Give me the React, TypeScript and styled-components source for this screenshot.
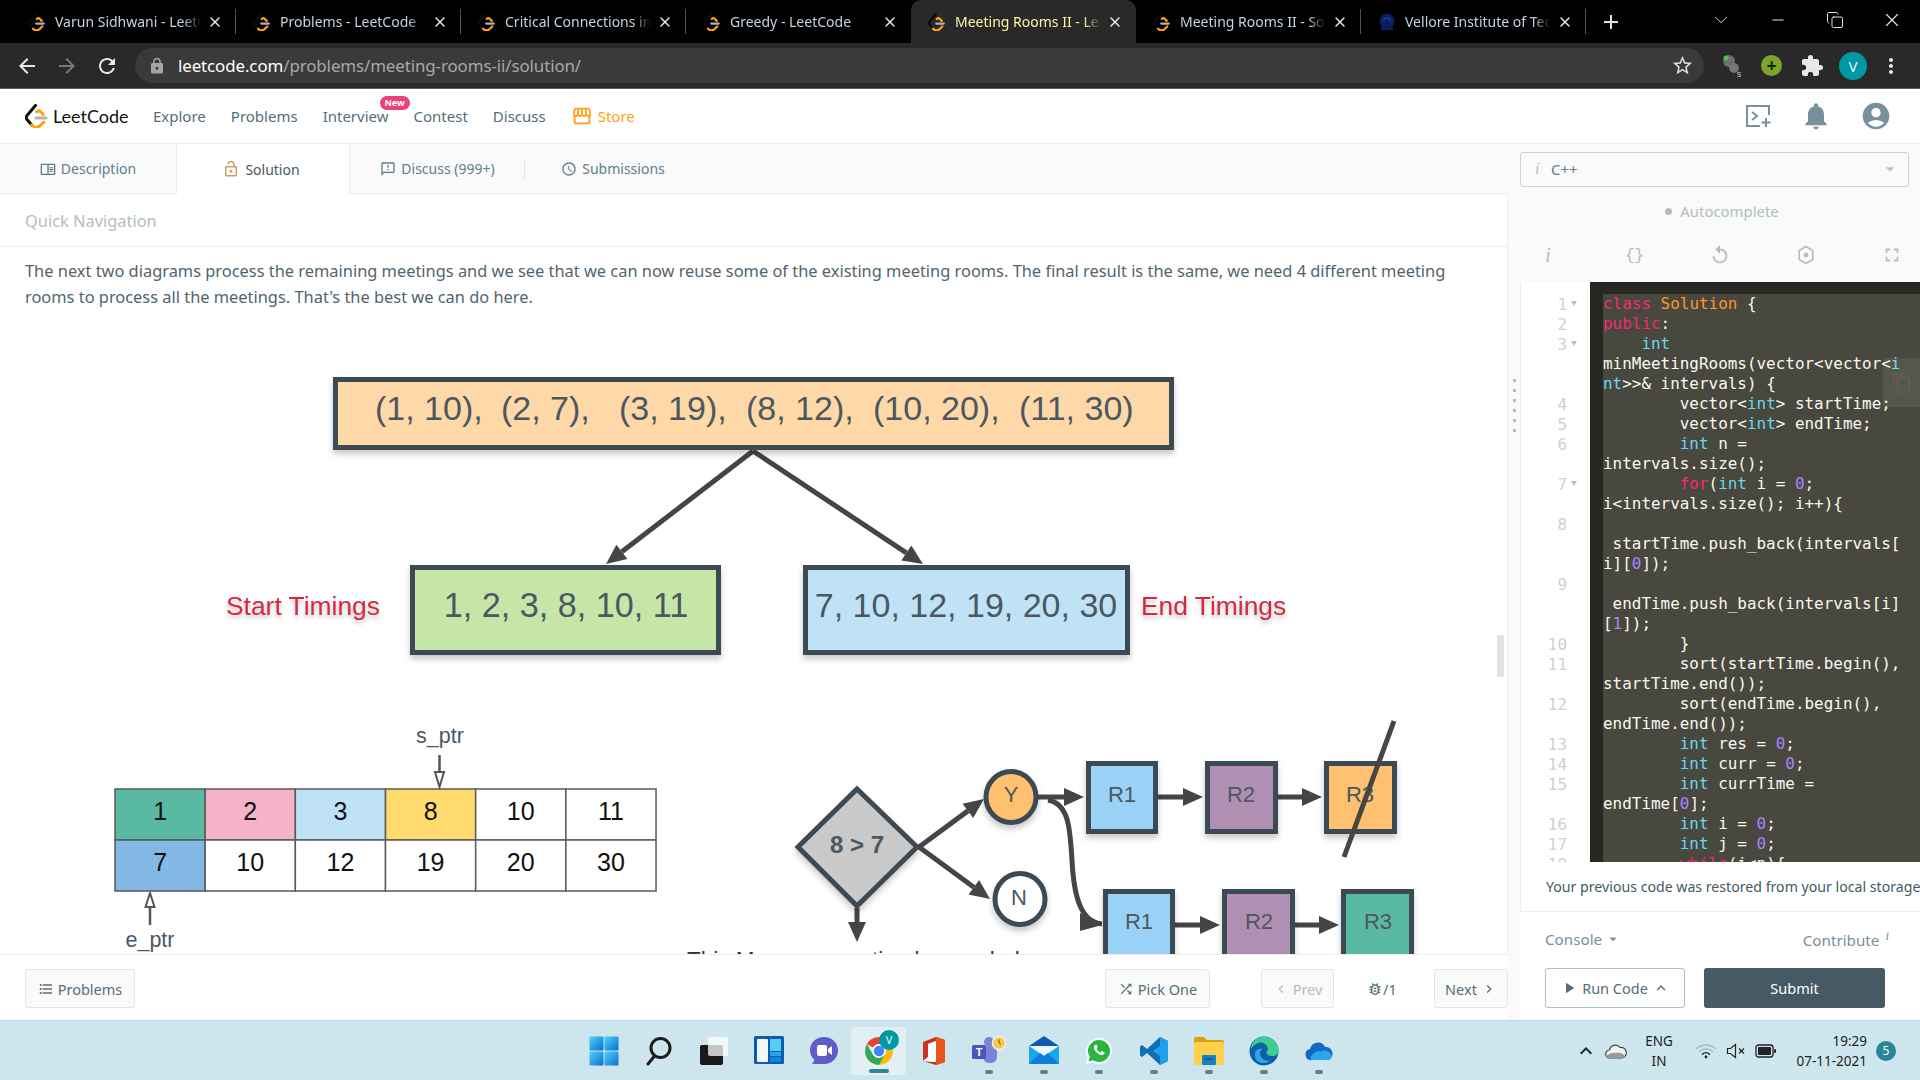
import React from "react"
import styled, { createGlobalStyle } from "styled-components"
import {
  MdArrowBack, MdArrowForward, MdRefresh, MdLock, MdStarBorder, MdExtension, MdMoreVert, MdStorefront,
  MdNotifications, MdAccountCircle, MdOutlineChromeReaderMode, MdLockOpen, MdOutlineFeedback, MdAccessTime,
  MdFormatListBulleted, MdShuffle, MdChevronLeft, MdChevronRight, MdOutlineBugReport, MdPlayArrow,
  MdKeyboardArrowUp, MdReplay, MdFullscreen, MdArrowDropDown, MdOutlineContentCopy, MdAdd,
} from "react-icons/md"
import { ChevronDown, Minus, Copy, X } from "lucide-react"

const UI_FONT = `"Noto Sans", "Open Sans", sans-serif`

const Global = createGlobalStyle`
  html, body { margin: 0; padding: 0; height: 100%; overflow: hidden; background: #fff; }
  body { font-family: ${UI_FONT}; }
  * { box-sizing: border-box; }
`

const Page = styled.div`
  width: 1920px;
  height: 1080px;
  display: flex;
  flex-direction: column;
  overflow: hidden;
`

/* ---------- browser chrome ---------- */

const TabStrip = styled.div`
  height: 43px;
  background: #000;
  display: flex;
  align-items: stretch;
  padding-left: 11px;
  flex: none;
`

const BrowserTab = styled.div<{ $active?: boolean; $last?: boolean }>`
  width: 225px;
  flex: none;
  display: flex;
  align-items: center;
  padding-left: 17px;
  position: relative;
  color: ${p => (p.$active ? "#fdf5a0" : "#c6d3e2")};
  background: ${p => (p.$active ? "#292929" : "transparent")};
  border-radius: ${p => (p.$active ? "10px 10px 0 0" : "0")};
  font-size: 14px;
  &::after {
    content: "";
    position: absolute;
    right: 0;
    top: 9px;
    bottom: 9px;
    width: 1px;
    background: ${p => (p.$active || p.$last ? "transparent" : "#555")};
  }
`

const TabTitle = styled.span`
  width: 146px;
  margin-left: 9px;
  white-space: nowrap;
  overflow: hidden;
  -webkit-mask-image: linear-gradient(to right, #000 88%, transparent);
  mask-image: linear-gradient(to right, #000 88%, transparent);
`

const TabClose = styled.span`
  margin-left: 6px;
  display: flex;
  color: #e8e8e8;
`

const NewTab = styled.div`
  width: 50px;
  display: flex;
  align-items: center;
  justify-content: center;
  font-size: 24px;
  color: #e0e0e0;
`

const WindowControls = styled.div`
  margin-left: auto;
  display: flex;
  align-items: center;
  color: #e8e8e8;
  padding-bottom: 4px;
`

const WindowButton = styled.div`
  width: 57px;
  display: flex;
  justify-content: center;
`

const AddressRow = styled.div`
  height: 46px;
  background: #292929;
  border-bottom: 1px solid #5c5c5c;
  display: flex;
  align-items: center;
  padding: 0 0 0 7px;
  flex: none;
`

const RoundIcon = styled.div<{ $muted?: boolean }>`
  width: 40px;
  display: flex;
  justify-content: center;
  font-size: 24px;
  color: ${p => (p.$muted ? "#777" : "#e8e8e8")};
`

const Omnibox = styled.div`
  margin-left: 8px;
  width: 1569px;
  height: 35px;
  border-radius: 18px;
  background: #3a3a3a;
  display: flex;
  align-items: center;
  padding: 0 10px 0 13px;
`

const LockIcon = styled(MdLock)`
  font-size: 18px;
  color: #a6a6a6;
`

const Url = styled.div`
  margin-left: 12px;
  font-size: 16.9px;
  color: #a8a8a8;
  letter-spacing: -0.1px;
  b { font-weight: 400; color: #fff; }
`

const StarIcon = styled(MdStarBorder)`
  margin-left: auto;
  font-size: 23px;
  color: #e0e0e0;
`

const Extensions = styled.div`
  display: flex;
  align-items: center;
  margin-left: 17px;
  gap: 18px;
`

const GreenExt = styled.div`
  width: 21px;
  height: 21px;
  border-radius: 50%;
  background: #7ca32a;
  color: #10240a;
  display: flex;
  align-items: center;
  justify-content: center;
  font-size: 17px;
  font-weight: 700;
`

const Avatar = styled.div`
  width: 28px;
  height: 28px;
  margin-left: -3px;
  border-radius: 50%;
  background: #0097a7;
  color: #e8f8fa;
  font-size: 15px;
  display: flex;
  align-items: center;
  justify-content: center;
`

const MoreIcon = styled(MdMoreVert)`
  font-size: 24px;
  color: #e8e8e8;
  margin-left: -6px;
`

/* ---------- leetcode nav ---------- */

const Nav = styled.div`
  height: 55px;
  flex: none;
  background: #fff;
  border-bottom: 1px solid #eeeeee;
  display: flex;
  align-items: center;
  padding-left: 25px;
`

const Brand = styled.div`
  display: flex;
  align-items: center;
  gap: 4px;
  font-family: "Lato", sans-serif;
  font-size: 18px;
  color: #111;
  width: 128px;
`

const NavItem = styled.div<{ $accent?: boolean }>`
  position: relative;
  font-size: 15px;
  color: ${p => (p.$accent ? "#ffa116" : "#546e7a")};
  margin-right: 25px;
  display: flex;
  align-items: center;
  gap: 5px;
  svg { font-size: 22px; }
`

const NewBadge = styled.span`
  position: absolute;
  left: 57px;
  top: -10px;
  width: 30px;
  height: 14px;
  border-radius: 7px;
  background: #ec407a;
  color: #fff;
  font-size: 9px;
  font-weight: 700;
  line-height: 14px;
  text-align: center;
`

const NavRight = styled.div`
  margin-left: auto;
  display: flex;
  align-items: center;
  gap: 28px;
  padding-right: 28px;
  color: #78909c;
  svg { display: block; }
`

/* ---------- workspace ---------- */

const Workspace = styled.div`
  flex: 1;
  min-height: 0;
  display: flex;
  background: #fafafa;
`

const LeftColumn = styled.div`
  width: 1508px;
  display: flex;
  flex-direction: column;
  flex: none;
`

const TabRow = styled.div`
  height: 50px;
  flex: none;
  display: flex;
  border-bottom: 1px solid #eeeeee;
`

const SubTab = styled.div<{ $active?: boolean; $w: number; $divider?: boolean }>`
  width: ${p => p.$w}px;
  height: ${p => (p.$active ? "50px" : "49px")};
  position: relative;
  display: flex;
  align-items: center;
  justify-content: center;
  gap: 5px;
  font-size: 14px;
  color: ${p => (p.$active ? "#455a64" : "#607d8b")};
  background: ${p => (p.$active ? "#fff" : "transparent")};
  border-right: ${p => (p.$active ? "1px solid #eeeeee" : "none")};
  border-left: ${p => (p.$active ? "1px solid #eeeeee" : "none")};
  svg { font-size: 16px; }
  &::after {
    content: "";
    display: ${p => (p.$divider ? "block" : "none")};
    position: absolute;
    right: 0;
    top: 15px;
    height: 20px;
    width: 1px;
    background: #e4e4e4;
  }
`

const SolutionIcon = styled(MdLockOpen)`
  color: #c8a165;
  margin-left: -4px;
  && { font-size: 18px; }
`

const ContentPanel = styled.div`
  flex: 1;
  min-height: 0;
  background: #fff;
  border-right: 1px solid #eeeeee;
  border-bottom: 1px solid #eeeeee;
  overflow: hidden;
  position: relative;
`

const QuickNav = styled.div`
  height: 53px;
  border-bottom: 1px solid #eeeeee;
  padding-left: 25px;
  display: flex;
  align-items: center;
  font-size: 16.4px;
  color: #b0bec5;
`

const Paragraph = styled.p`
  margin: 0;
  padding: 11px 25px 0;
  font-size: 16.4px;
  line-height: 26px;
  color: #4f6570;
  width: 1482px;
  height: 63px;
`

const Scrollbar = styled.div`
  position: absolute;
  right: 3px;
  top: 441px;
  width: 7px;
  height: 42px;
  background: #e2e2e2;
`

const Diagram = styled.svg`
  display: block;
  font-family: "Liberation Sans", Arial, sans-serif;
`

const ShadowGroup = styled.g`
  filter: drop-shadow(0 4px 3px rgba(0, 0, 0, 0.22));
`

const BoxRect = styled.rect`
  stroke: #3c4a56;
  stroke-width: 5;
`

const Label = styled.text<{ $size: number; $color?: string; $bold?: boolean }>`
  font-size: ${p => p.$size}px;
  fill: ${p => p.$color || "#4b5761"};
  font-weight: ${p => (p.$bold ? 700 : 400)};
`

const RedLabel = styled(Label)`
  filter: drop-shadow(0 3px 2px rgba(0, 0, 0, 0.25));
`

const Footer = styled.div`
  height: 65px;
  flex: none;
  background: #fff;
  display: flex;
  align-items: center;
  padding: 2px 0 0 25px;
  position: relative;
`

const FooterButton = styled.div<{ $dim?: boolean; $w: number; $ml?: number }>`
  width: ${p => p.$w}px;
  height: 39px;
  margin-left: ${p => p.$ml || 0}px;
  border: 1px solid #dfe5e8;
  border-radius: 3px;
  background: #fafafa;
  display: flex;
  align-items: center;
  justify-content: center;
  gap: 4px;
  font-size: 14.5px;
  color: ${p => (p.$dim ? "#b0bec5" : "#546e7a")};
  svg { font-size: 16px; }
`

const BugCount = styled.div`
  margin-left: 33px;
  width: 67px;
  display: flex;
  align-items: center;
  font-size: 14.5px;
  color: #546e7a;
  svg { font-size: 16px; }
`

const Splitter = styled.div`
  width: 12px;
  flex: none;
  display: flex;
  flex-direction: column;
  align-items: center;
  justify-content: center;
  gap: 7px;
  padding-bottom: 354px;
`

const GripDot = styled.span`
  width: 3px;
  height: 3px;
  background: #bbb;
`

const RightColumn = styled.div`
  flex: 1;
  min-width: 0;
  display: flex;
  flex-direction: column;
  overflow: hidden;
`

const LangSelect = styled.div`
  margin-top: 8px;
  width: 389px;
  height: 35px;
  flex: none;
  border: 1px solid #c5d5dd;
  border-radius: 3px;
  background: #fafafa;
  display: flex;
  align-items: center;
  padding: 0 0 2px 14px;
  font-size: 15px;
  color: #607d8b;
  i { font-family: "Liberation Serif", serif; color: #b0bec5; width: 16px; font-size: 16px; }
  svg { margin-left: auto; margin-right: 8px; font-size: 20px; color: #b0bec5; }
`

const AutoRow = styled.div`
  height: 50px;
  flex: none;
  display: flex;
  align-items: center;
  justify-content: center;
  padding: 0 0 2px 4px;
  gap: 8px;
  font-size: 14.9px;
  color: #b0bec5;
  &::before {
    content: "";
    width: 7px;
    height: 7px;
    border-radius: 50%;
    background: #b0bec5;
  }
`

const IconRow = styled.div`
  height: 38px;
  flex: none;
  display: flex;
  align-items: center;
  justify-content: space-between;
  color: #b0bec5;
  padding: 0 16px 2px;
  svg { display: block; }
`

const ToolIcon = styled.div`
  width: 24px;
  display: flex;
  justify-content: center;
  font-size: 22px;
  line-height: 1;
`

const ItalicI = styled.span`
  font-family: "Liberation Serif", serif;
  font-style: italic;
  font-size: 21px;
`

const Editor = styled.div`
  height: 580px;
  flex: none;
  margin-top: 7px;
  border-left: 1px solid #eeeeee;
  display: grid;
  grid-template-columns: 69px 1fr;
  overflow: hidden;
  background: #272822;
  position: relative;
`

const Gutter = styled.div`
  background: #fff;
  padding-top: 13px;
`

const GutterRow = styled.div`
  height: 20px;
  font-family: "DejaVu Sans Mono", monospace;
  font-size: 15.9px;
  line-height: 20px;
  color: #cfcfcf;
  display: flex;
  justify-content: flex-end;
  padding-right: 12px;
`

const FoldMark = styled.span<{ $show: boolean }>`
  width: 11px;
  padding-left: 4px;
  visibility: ${p => (p.$show ? "visible" : "hidden")};
  &::before {
    content: "";
    display: inline-block;
    border: 3.5px solid transparent;
    border-top: 5px solid #bbb;
    vertical-align: 1px;
  }
`

const CodeArea = styled.div`
  margin: 12px 0 0 13px;
  background: #49483e;
`

const CodeRow = styled.div`
  height: 20px;
  font-family: "DejaVu Sans Mono", monospace;
  font-size: 15.94px;
  line-height: 20px;
  white-space: pre;
  color: #f8f8f2;
`

const Tok = styled.span<{ $c: string }>`
  color: ${p => p.$c};
`

const CopyButton = styled.div`
  position: absolute;
  right: 0;
  top: 76px;
  width: 37px;
  height: 49px;
  background: rgba(255, 255, 255, 0.08);
  display: flex;
  align-items: center;
  justify-content: center;
  color: #5e5d54;
  font-size: 22px;
`

const Notice = styled.div`
  height: 50px;
  flex: none;
  background: #fff;
  border-left: 1px solid #eeeeee;
  border-bottom: 1px solid #eeeeee;
  display: flex;
  align-items: center;
  padding-left: 25px;
  font-size: 14.15px;
  color: #455a64;
  white-space: nowrap;
`

const LowerPane = styled.div`
  flex: 1;
  background: #fff;
  padding-left: 25px;
`

const ConsoleRow = styled.div`
  height: 56px;
  width: 344px;
  display: flex;
  align-items: center;
  justify-content: space-between;
  font-size: 15.2px;
  color: #78909c;
  padding-bottom: 2px;
`

const ConsoleLabel = styled.span`
  display: flex;
  align-items: center;
  gap: 2px;
  svg { font-size: 18px; }
`

const Contribute = styled.span`
  sup { font-family: "Liberation Serif", serif; font-style: italic; margin-left: 6px; font-size: 13px; }
`

const ActionRow = styled.div`
  display: flex;
  gap: 19px;
`

const RunButton = styled.div`
  width: 140px;
  height: 40px;
  border: 1px solid #b0bec5;
  border-radius: 3px;
  background: #fff;
  display: flex;
  align-items: center;
  justify-content: center;
  gap: 4px;
  font-size: 14.5px;
  color: #546e7a;
  svg { font-size: 18px; }
`

const SubmitButton = styled.div`
  width: 181px;
  height: 40px;
  border-radius: 3px;
  background: #455a64;
  color: #fff;
  display: flex;
  align-items: center;
  justify-content: center;
  font-size: 14.5px;
`

/* ---------- taskbar ---------- */

const Taskbar = styled.div`
  height: 60px;
  flex: none;
  background: #cde6ee;
  border-top: 1px solid #bcd8e0;
  display: grid;
  grid-template-columns: 1fr auto 1fr;
  align-items: center;
`

const TaskIcons = styled.div`
  grid-column: 2;
  display: flex;
  padding-left: 2px;
`

const TaskCell = styled.div<{ $on?: boolean }>`
  width: 55px;
  height: 48px;
  position: relative;
  display: flex;
  align-items: center;
  justify-content: center;
  border-radius: 4px;
  background: ${p => (p.$on ? "rgba(255,255,255,0.42)" : "transparent")};
`

const RunDot = styled.span<{ $wide?: boolean }>`
  position: absolute;
  bottom: ${p => (p.$wide ? "2px" : "1px")};
  left: 50%;
  transform: translateX(-50%);
  width: ${p => (p.$wide ? "20px" : "8px")};
  height: 4px;
  border-radius: 2px;
  background: ${p => (p.$wide ? "#2d8596" : "#6b7b85")};
`

const CellBadge = styled.span`
  position: absolute;
  right: 7px;
  top: 3px;
  width: 20px;
  height: 20px;
  border-radius: 50%;
  background: #0097a7;
  color: #e8f8fa;
  font-size: 11px;
  display: flex;
  align-items: center;
  justify-content: center;
`

const Tray = styled.div`
  grid-column: 3;
  justify-self: end;
  display: flex;
  align-items: center;
  padding-right: 24px;
  color: #222;
  font-size: 13px;
`

const TrayStack = styled.div<{ $right?: boolean; $w: number }>`
  display: flex;
  flex-direction: column;
  align-items: ${p => (p.$right ? "flex-end" : "center")};
  width: ${p => p.$w}px;
  line-height: 20px;
  font-size: 13.5px;
`

const TrayIcon = styled.div<{ $w: number }>`
  width: ${p => p.$w}px;
  display: flex;
  justify-content: center;
  svg { display: block; }
`

const CountBadge = styled.div`
  margin-left: 9px;
  width: 20px;
  height: 20px;
  border-radius: 50%;
  background: #2a8599;
  color: #fff;
  font-size: 12px;
  display: flex;
  align-items: center;
  justify-content: center;
`

/* ---------- small drawings ---------- */

const LeetLogo = ({ size, ink }: { size: number; ink: string }) => (
  <svg width={size} height={size} viewBox="0 0 24 24" fill="none" strokeLinecap="round" strokeLinejoin="round" strokeWidth="3">
    <path d="M10.500 1.500 2 11.500q-1.500 2 0 4L6.700 21" stroke={ink} />
    <path d="M6.700 21q2.500 2.500 5 2.300 2-.2 3.500-1.600L19 18" stroke="#ffa116" />
    <path d="M11.700 7.700q2-1.500 3.500-.3L18.300 10.500" stroke="#ffa116" />
    <path d="M11 14h10" stroke="#b3b3b3" />
  </svg>
)

const TerminalPlus = () => (
  <svg width="28" height="24" viewBox="0 0 28 24" fill="none" stroke="#78909c" strokeWidth="2">
    <path d="M25 11V2H3v20h13" />
    <path d="m8 8 5 4-5 4" />
    <path d="M22 14v9M17.500 18.500h9" />
  </svg>
)

const BraceText = styled.span`
  font-family: "Liberation Mono", monospace;
  font-size: 17px;
  letter-spacing: -1px;
`

const GearIcon = () => (
  <svg width="18" height="20" viewBox="0 0 18 20" fill="none" stroke="#b0bec5" strokeWidth="1.600">
    <path d="M9 1.500l6.800 4v9L9 18.500l-6.800-4v-9z" />
    <circle cx="9" cy="10" r="1.600" fill="#b0bec5" />
  </svg>
)

const VelloreIcon = () => (
  <svg width="18" height="18" viewBox="0 0 18 18">
    <circle cx="9" cy="8" r="7.500" fill="#0a1f5c" />
    <path d="M3 14h12v3H3z" fill="#0a1f5c" />
    <path d="M5.500 8a3.500 3 0 0 1 7 0" stroke="#1e3f9e" fill="none" strokeWidth="1.500" />
  </svg>
)

const StartIcon = () => (
  <svg width="30" height="30" viewBox="0 0 30 30">
    <defs>
      <linearGradient id="startG" x1="0" y1="0" x2="1" y2="1">
        <stop offset="0" stopColor="#4fd0fb" />
        <stop offset="1" stopColor="#0a6fd0" />
      </linearGradient>
    </defs>
    <rect x="0.500" y="0.500" width="14" height="14" rx="1" fill="url(#startG)" />
    <rect x="15.500" y="0.500" width="14" height="14" rx="1" fill="url(#startG)" />
    <rect x="0.500" y="15.500" width="14" height="14" rx="1" fill="url(#startG)" />
    <rect x="15.500" y="15.500" width="14" height="14" rx="1" fill="url(#startG)" />
  </svg>
)

const SearchIcon = () => (
  <svg width="28" height="30" viewBox="0 0 28 30" fill="none" stroke="#1c1c1c" strokeWidth="3">
    <circle cx="15.500" cy="12" r="9.500" />
    <path d="M9.500 20 3 28" strokeLinecap="round" />
  </svg>
)

const TaskViewIcon = () => (
  <svg width="30" height="30" viewBox="0 0 30 30">
    <rect x="1" y="9" width="23" height="20" rx="2" fill="#1a1a1a" />
    <rect x="9" y="1" width="20" height="19" rx="2" fill="#fff" fillOpacity="0.75" />
  </svg>
)

const WidgetsIcon = () => (
  <svg width="30" height="30" viewBox="0 0 30 30">
    <rect x="0" y="0" width="30" height="28" rx="1.500" fill="#0b5cad" />
    <rect x="3" y="3" width="11" height="23" rx="1" fill="#f2f6fa" />
    <rect x="16" y="3" width="11" height="12" fill="#58cdf5" />
    <rect x="16" y="16" width="11" height="4" fill="#2aa4ec" />
    <rect x="16" y="21" width="11" height="5" fill="#0a84e0" />
  </svg>
)

const ChatIcon = () => (
  <svg width="30" height="30" viewBox="0 0 30 30">
    <path d="M15 1c8 0 14 6 14 13.500S23 28 15 28H3l2.500-4C3 21.500 1 18.500 1 14.500 1 6.500 7 1 15 1z" fill="#5f5bc9" />
    <rect x="8" y="9" width="10" height="11" rx="2" fill="#fff" />
    <path d="m19 13 4-3v9l-4-3z" fill="#fff" />
  </svg>
)

const ChromeIcon = () => (
  <svg width="30" height="30" viewBox="0 0 30 30">
    <path d="M15 1a14 14 0 0 1 12.100 7H15a7 7 0 0 0-6.100 3.500L2.900 8A14 14 0 0 1 15 1z" fill="#ea4335" />
    <path d="M27.100 8A14 14 0 0 1 15 29l6.100-10.500A7 7 0 0 0 21 11.500L27.100 8z" fill="#fbbc04" />
    <path d="M15 29A14 14 0 0 1 2.900 8l6 10.500a7 7 0 0 0 6.100 3.500l6.100-3.500z" fill="#34a853" />
    <circle cx="15" cy="15" r="6" fill="#4285f4" stroke="#fff" strokeWidth="1.500" />
  </svg>
)

const OfficeIcon = () => (
  <svg width="26" height="30" viewBox="0 0 26 30">
    <path d="M2 6 15 1l9 3v22l-9 3-13-4 13 1V5l-8 3v13l-5 4z" fill="#c8321e" />
    <path d="M15 1l9 3v22l-9 3z" fill="#e8541c" />
    <path d="M15 5v21l-13-1 5-4V8z" fill="#fff" fillOpacity="0.9" />
  </svg>
)

const TeamsIcon = () => (
  <svg width="36" height="32" viewBox="0 0 36 32">
    <circle cx="18" cy="7" r="5" fill="#7b83d8" />
    <rect x="12" y="11" width="14" height="17" rx="6" fill="#7b83d8" />
    <rect x="1" y="10" width="14" height="14" rx="1.500" fill="#4b53bc" />
    <text x="8" y="21" fontSize="11" fontWeight="700" fill="#fff" textAnchor="middle" fontFamily="Liberation Sans">T</text>
    <circle cx="28" cy="8" r="6.500" fill="#f7c948" stroke="#eee" strokeWidth="1.500" />
    <path d="M28 4.500V8l2 1.500" stroke="#7a5a00" strokeWidth="1" fill="none" />
  </svg>
)

const MailIcon = () => (
  <svg width="30" height="30" viewBox="0 0 30 30">
    <path d="M0 10 15 0l15 10v5H0z" fill="#0b5cad" />
    <rect x="0" y="10" width="30" height="18" fill="#1aa6ea" />
    <path d="M0 10h30L15 20z" fill="#eaf6fc" />
    <path d="M0 28l11-11 4 3 4-3 11 11z" fill="#0e7fd6" />
  </svg>
)

const WhatsappIcon = () => (
  <svg width="28" height="28" viewBox="0 0 28 28">
    <path d="M14 1a13 13 0 0 1 0 26c-2.400 0-4.500-.6-6.400-1.700L1 27l1.800-6.400A13 13 0 0 1 14 1z" fill="#fff" />
    <path d="M14 3a11 11 0 0 1 0 22c-2.200 0-4.200-.6-5.900-1.700L3.500 24.500l1.300-4.500A11 11 0 0 1 14 3z" fill="#2ab540" />
    <path d="M10 8c-1.500 1.200-1.500 3 0 5.400 1.800 2.800 4.400 4.600 6.600 4.600 1.700 0 3-1 3.200-2.400l-3-1.500-1.300 1.400c-1.800-.7-3.200-2.200-4-4l1.200-1.300-1.400-2.900z" fill="#fff" />
  </svg>
)

const VsCodeIcon = () => (
  <svg width="30" height="30" viewBox="0 0 30 30">
    <path d="M21 1 29 5v20l-8 4-13-12 -5 4-2-1.500v-9L3 9l5 4z" fill="#0f6fb5" />
    <path d="M21 1 29 5v20l-8 4V20l-7-5 7-5z" fill="#1ea1ea" />
  </svg>
)

const FolderIcon = () => (
  <svg width="30" height="28" viewBox="0 0 30 28">
    <path d="M0 2q0-2 2-2h8l3 3h15q2 0 2 2v3H0z" fill="#d9a30a" />
    <rect x="0" y="5" width="30" height="23" rx="1.500" fill="#ffd04f" />
    <rect x="8" y="18" width="14" height="10" rx="1" fill="#1581c7" />
    <rect x="11" y="21" width="8" height="2" fill="#0b5a99" />
  </svg>
)

const EdgeIcon = () => (
  <svg width="30" height="30" viewBox="0 0 30 30">
    <circle cx="15" cy="15" r="14.500" fill="#0d5fad" />
    <path d="M15 .5C23 .5 29.500 7 29.500 15c0 3-2.500 5-6 5-4 0-6-1.500-6-3.500 0-1 .5-2 1.500-2.800C18.500 8 13 5.500 9 7c-3 1-5.500 3.500-7 6C2.500 6 8 .5 15 .5z" fill="#3ccf8e" />
    <path d="M11 17c0 4.500 4 8 9.500 8-1.800 1.500-3.800 2-6 2C8 27 5 22 6 17c.8-3.500 4.500-5 7.500-4-1.500 1-2.500 2.300-2.500 4z" fill="#29a8e0" />
  </svg>
)

const OneDriveIcon = () => (
  <svg width="28" height="20" viewBox="0 0 28 20">
    <path d="M6 19a5.500 5.500 0 0 1-1-10.900A8 8 0 0 1 20 6a6.500 6.500 0 0 1 2 13z" fill="#1268c3" />
    <path d="M8 19c-3 0-3-3-1-4.500 1.500-3 5-5 9-4 3-2 8-1 9 2 2 .8 3 5-1 6.500z" fill="#28a8ea" />
  </svg>
)

const TrayCloud = () => (
  <svg width="22" height="16" viewBox="0 0 22 16">
    <path d="M5 15a4 4 0 0 1-.6-8A6 6 0 0 1 15 4.500 4.800 4.800 0 0 1 17 15z" fill="#f2f2f2" stroke="#444" strokeWidth="1.200" />
    <path d="M5 15a3.500 3.500 0 0 1-3-3c3-1.500 5-3 9-2 3-1 7 0 9 3-.5 1-1.500 2-3 2z" fill="#999" />
  </svg>
)

const WifiIcon = () => (
  <svg width="22" height="16" viewBox="0 0 22 16" fill="none" strokeLinecap="round">
    <path d="M1.500 5.500a14 14 0 0 1 19 0" stroke="#9fb4ba" strokeWidth="1.300" />
    <path d="M4.500 8.500a9.500 9.500 0 0 1 13 0" stroke="#9fb4ba" strokeWidth="1.300" />
    <path d="M7.500 11.200a5 5 0 0 1 7 0" stroke="#222" strokeWidth="1.400" />
    <circle cx="11" cy="14" r="1.400" fill="#222" />
  </svg>
)

const MuteIcon = () => (
  <svg width="22" height="16" viewBox="0 0 22 16" fill="none" stroke="#222" strokeWidth="1.200">
    <path d="M1.500 5.500h3l5-4v13l-5-4h-3z" />
    <path d="m13 5.500 5 5M18 5.500l-5 5" />
  </svg>
)

const BatteryIcon = () => (
  <svg width="22" height="14" viewBox="0 0 22 14">
    <rect x="1" y="1" width="17" height="12" rx="2.500" fill="none" stroke="#222" strokeWidth="1.300" />
    <rect x="3" y="3" width="13" height="8" rx="1" fill="#222" />
    <rect x="19" y="5" width="2" height="4" rx="1" fill="#222" />
  </svg>
)

/* ---------- data ---------- */

const browserTabs = [
  { title: "Varun Sidhwani - LeetCode" },
  { title: "Problems - LeetCode" },
  { title: "Critical Connections in a Network" },
  { title: "Greedy - LeetCode", last: true },
  { title: "Meeting Rooms II - LeetCode", active: true },
  { title: "Meeting Rooms II - Solution" },
  { title: "Vellore Institute of Technology", vit: true },
]

const KW = "#f92672"
const TY = "#66d9ef"
const NUM = "#ae81ff"
const CL = "#fd971f"

type Seg = string | [string, string]
type Row = { n?: number; fold?: boolean; segs: Seg[] }

const codeRows: Row[] = [
  { n: 1, fold: true, segs: [["class", KW], " ", ["Solution", CL], " {"] },
  { n: 2, segs: [["public", KW], ":"] },
  { n: 3, fold: true, segs: ["    ", ["int", TY]] },
  { segs: ["minMeetingRooms(vector<vector<", ["i", TY]] },
  { segs: [["nt", TY], ">>& intervals) {"] },
  { n: 4, segs: ["        vector<", ["int", TY], "> startTime;"] },
  { n: 5, segs: ["        vector<", ["int", TY], "> endTime;"] },
  { n: 6, segs: ["        ", ["int", TY], " n ="] },
  { segs: ["intervals.size();"] },
  { n: 7, fold: true, segs: ["        ", ["for", KW], "(", ["int", TY], " i = ", ["0", NUM], ";"] },
  { segs: ["i<intervals.size(); i++){"] },
  { n: 8, segs: [""] },
  { segs: [" startTime.push_back(intervals["] },
  { segs: ["i][", ["0", NUM], "]);"] },
  { n: 9, segs: [""] },
  { segs: [" endTime.push_back(intervals[i]"] },
  { segs: ["[", ["1", NUM], "]);"] },
  { n: 10, segs: ["        }"] },
  { n: 11, segs: ["        sort(startTime.begin(),"] },
  { segs: ["startTime.end());"] },
  { n: 12, segs: ["        sort(endTime.begin(),"] },
  { segs: ["endTime.end());"] },
  { n: 13, segs: ["        ", ["int", TY], " res = ", ["0", NUM], ";"] },
  { n: 14, segs: ["        ", ["int", TY], " curr = ", ["0", NUM], ";"] },
  { n: 15, segs: ["        ", ["int", TY], " currTime ="] },
  { segs: ["endTime[", ["0", NUM], "];"] },
  { n: 16, segs: ["        ", ["int", TY], " i = ", ["0", NUM], ";"] },
  { n: 17, segs: ["        ", ["int", TY], " j = ", ["0", NUM], ";"] },
  { n: 18, segs: ["        ", ["while", KW], "(i<n){"] },
]

const tableTop = [
  { v: "1", fill: "#5ab9a3" },
  { v: "2", fill: "#f4b3c8" },
  { v: "3", fill: "#bfe2f6" },
  { v: "8", fill: "#ffdb6e" },
  { v: "10", fill: "#fff" },
  { v: "11", fill: "#fff" },
]

const tableBottom = [
  { v: "7", fill: "#83b8e4" },
  { v: "10", fill: "#fff" },
  { v: "12", fill: "#fff" },
  { v: "19", fill: "#fff" },
  { v: "20", fill: "#fff" },
  { v: "30", fill: "#fff" },
]

const taskIcons = [
  { icon: <StartIcon /> },
  { icon: <SearchIcon /> },
  { icon: <TaskViewIcon /> },
  { icon: <WidgetsIcon /> },
  { icon: <ChatIcon /> },
  { icon: <ChromeIcon />, on: true },
  { icon: <OfficeIcon /> },
  { icon: <TeamsIcon />, dot: true },
  { icon: <MailIcon />, dot: true },
  { icon: <WhatsappIcon />, dot: true },
  { icon: <VsCodeIcon />, dot: true },
  { icon: <FolderIcon />, dot: true },
  { icon: <EdgeIcon />, dot: true },
  { icon: <OneDriveIcon />, dot: true },
]

const topPairs = [
  { x: 375, t: "(1, 10)," },
  { x: 501, t: "(2, 7)," },
  { x: 619, t: "(3, 19)," },
  { x: 746, t: "(8, 12)," },
  { x: 873, t: "(10, 20)," },
  { x: 1019, t: "(11, 30)" },
]

const DARK = "#454545"
const CELL_W = 90.17

const FlowArrow = ({ x1, y1, x2, y2 }: { x1: number; y1: number; x2: number; y2: number }) => {
  // line ending in a solid head
  const len = Math.hypot(x2 - x1, y2 - y1)
  const ux = (x2 - x1) / len
  const uy = (y2 - y1) / len
  const bx = x2 - ux * 20
  const by = y2 - uy * 20
  const head = `${x2},${y2} ${bx - uy * 9},${by + ux * 9} ${bx + uy * 9},${by - ux * 9}`
  return (
    <g>
      <line x1={x1} y1={y1} x2={bx} y2={by} stroke={DARK} strokeWidth={5} />
      <polygon points={head} fill={DARK} />
    </g>
  )
}

const SolutionDiagram = () => (
  <Diagram width={1507} height={650} viewBox="0 310 1507 650">
    <FlowArrow x1={753} y1={451} x2={606} y2={564} />
    <FlowArrow x1={753} y1={451} x2={923} y2={564} />

    <ShadowGroup>
      <BoxRect x={335.5} y={379.5} width={836} height={68} fill="#ffd8a8" />
    </ShadowGroup>
    {topPairs.map(p => (
      <Label key={p.x} x={p.x} y={420} $size={34}>{p.t}</Label>
    ))}

    <ShadowGroup>
      <BoxRect x={412.5} y={567.5} width={306} height={85} fill="#c5e6a6" />
      <BoxRect x={805.5} y={567.5} width={322} height={85} fill="#bfe2f6" />
    </ShadowGroup>
    <Label x={566} y={617} $size={34.2} textAnchor="middle">1, 2, 3, 8, 10, 11</Label>
    <Label x={966} y={617} $size={34} textAnchor="middle">7, 10, 12, 19, 20, 30</Label>
    <RedLabel x={226} y={615} $size={26.4} $color="#d5293f">Start Timings</RedLabel>
    <RedLabel x={1141} y={615} $size={26.4} $color="#d5293f">End Timings</RedLabel>

    <Label x={440} y={743} $size={21.5} textAnchor="middle">s_ptr</Label>
    <line x1={439.5} y1={755} x2={439.5} y2={772} stroke="#555" strokeWidth={2.5} />
    <polygon points="439.5,787 435,772 444,772" fill="#fff" stroke="#555" strokeWidth={2} />
    <Label x={150} y={947} $size={21.5} textAnchor="middle">e_ptr</Label>
    <line x1={150} y1={925} x2={150} y2={907} stroke="#555" strokeWidth={2.5} />
    <polygon points="150,893 145.5,907 154.5,907" fill="#fff" stroke="#555" strokeWidth={2} />

    {tableTop.map((c, i) => (
      <g key={`t${i}`}>
        <rect x={115 + i * CELL_W} y={789} width={CELL_W} height={51} fill={c.fill} stroke="#5a5a5a" strokeWidth={1.5} />
        <Label x={115 + (i + 0.5) * CELL_W} y={820} $size={25} $color="#111" textAnchor="middle">{c.v}</Label>
      </g>
    ))}
    {tableBottom.map((c, i) => (
      <g key={`b${i}`}>
        <rect x={115 + i * CELL_W} y={840} width={CELL_W} height={51} fill={c.fill} stroke="#5a5a5a" strokeWidth={1.5} />
        <Label x={115 + (i + 0.5) * CELL_W} y={871} $size={25} $color="#111" textAnchor="middle">{c.v}</Label>
      </g>
    ))}

    <FlowArrow x1={919} y1={847} x2={984} y2={799} />
    <FlowArrow x1={919} y1={847} x2={990} y2={899} />
    <FlowArrow x1={857} y1={908} x2={857} y2={942} />
    <ShadowGroup>
      <polygon points="857,789 917,847 857,906 798,847" fill="#c9c9c9" stroke="#3c4a56" strokeWidth={5} />
    </ShadowGroup>
    <Label x={857} y={853} $size={24} $bold textAnchor="middle">8 {">"} 7</Label>

    <path d="M1048 800c22 4 22 32 24 60 2 40 10 62 30 64" fill="none" stroke={DARK} strokeWidth={5} />
    <polygon points="1102,925 1080,913 1080,931" fill={DARK} />

    <FlowArrow x1={1038} y1={797} x2={1084} y2={797} />
    <FlowArrow x1={1158} y1={797} x2={1203} y2={797} />
    <FlowArrow x1={1278} y1={797} x2={1322} y2={797} />
    <FlowArrow x1={1175} y1={925} x2={1220} y2={925} />
    <FlowArrow x1={1295} y1={925} x2={1339} y2={925} />

    <ShadowGroup>
      <ellipse cx={1011} cy={797} rx={25} ry={25.5} fill="#ffc06f" stroke="#3c4a56" strokeWidth={5} />
      <ellipse cx={1020} cy={899} rx={25} ry={25.5} fill="#fff" stroke="#3c4a56" strokeWidth={5} />
      <BoxRect x={1088.5} y={763.5} width={67} height={68} fill="#99d2f6" />
      <BoxRect x={1207.5} y={763.5} width={68} height={68} fill="#b08fb3" />
      <BoxRect x={1326.5} y={763.5} width={68} height={68} fill="#ffc06f" />
      <BoxRect x={1105.5} y={891.5} width={67} height={68} fill="#99d2f6" />
      <BoxRect x={1224.5} y={891.5} width={68} height={68} fill="#b08fb3" />
      <BoxRect x={1343.5} y={891.5} width={68} height={68} fill="#5ab9a3" />
    </ShadowGroup>
    <Label x={1011} y={802} $size={22} textAnchor="middle">Y</Label>
    <Label x={1019} y={905} $size={22} textAnchor="middle">N</Label>
    <Label x={1122} y={802} $size={22} textAnchor="middle">R1</Label>
    <Label x={1241} y={802} $size={22} textAnchor="middle">R2</Label>
    <Label x={1360} y={802} $size={22} textAnchor="middle">R3</Label>
    <Label x={1139} y={929} $size={22} textAnchor="middle">R1</Label>
    <Label x={1259} y={929} $size={22} textAnchor="middle">R2</Label>
    <Label x={1378} y={929} $size={22} textAnchor="middle">R3</Label>
    <line x1={1394} y1={721} x2={1344} y2={857} stroke={DARK} strokeWidth={5} />

    <Label x={687} y={967} $size={22.5} $color="#333">This Means a meeting has ended</Label>
  </Diagram>
)

export default function App() {
  return (
    <Page>
      <Global />
      <TabStrip>
        {browserTabs.map(t => (
          <BrowserTab key={t.title} $active={t.active} $last={t.last}>
            {t.vit ? <VelloreIcon /> : <LeetLogo size={18} ink="#0a0a0a" />}
            <TabTitle>{t.title}</TabTitle>
            <TabClose><X size={16} strokeWidth={2.2} /></TabClose>
          </BrowserTab>
        ))}
        <NewTab><MdAdd /></NewTab>
        <WindowControls>
          <WindowButton><ChevronDown size={22} strokeWidth={1} /></WindowButton>
          <WindowButton><Minus size={18} strokeWidth={1.3} /></WindowButton>
          <WindowButton><Copy size={18} strokeWidth={1.3} /></WindowButton>
          <WindowButton><X size={22} strokeWidth={1.2} /></WindowButton>
        </WindowControls>
      </TabStrip>

      <AddressRow>
        <RoundIcon><MdArrowBack /></RoundIcon>
        <RoundIcon $muted><MdArrowForward /></RoundIcon>
        <RoundIcon><MdRefresh /></RoundIcon>
        <Omnibox>
          <LockIcon />
          <Url><b>leetcode.com</b>/problems/meeting-rooms-ii/solution/</Url>
          <StarIcon />
        </Omnibox>
        <Extensions>
          <svg width="22" height="26" viewBox="0 0 22 26">
            <circle cx="8" cy="8" r="6" fill="#6f6f6f" />
            <circle cx="5" cy="5" r="2.500" fill="#4fc24f" />
            <circle cx="13" cy="15" r="5" fill="#777" />
            <text x="18" y="24" fontSize="9" fill="#ccc" fontFamily="Liberation Sans" textAnchor="middle">s</text>
          </svg>
          <GreenExt>+</GreenExt>
          <MdExtension size={24} color="#e8e8e8" />
          <Avatar>V</Avatar>
          <MoreIcon />
        </Extensions>
      </AddressRow>

      <Nav>
        <Brand>
          <LeetLogo size={24} ink="#111" />
          LeetCode
        </Brand>
        <NavItem>Explore</NavItem>
        <NavItem>Problems</NavItem>
        <NavItem>Interview<NewBadge>New</NewBadge></NavItem>
        <NavItem>Contest</NavItem>
        <NavItem>Discuss</NavItem>
        <NavItem $accent><MdStorefront />Store</NavItem>
        <NavRight>
          <TerminalPlus />
          <MdNotifications size={32} />
          <MdAccountCircle size={32} />
        </NavRight>
      </Nav>

      <Workspace>
        <LeftColumn>
          <TabRow>
            <SubTab $w={176}><MdOutlineChromeReaderMode />Description</SubTab>
            <SubTab $w={174} $active><SolutionIcon />Solution</SubTab>
            <SubTab $w={175} $divider><MdOutlineFeedback />Discuss (999+)</SubTab>
            <SubTab $w={176}><MdAccessTime />Submissions</SubTab>
          </TabRow>
          <ContentPanel>
            <QuickNav>Quick Navigation</QuickNav>
            <Paragraph>
              The next two diagrams process the remaining meetings and we see that we can now reuse some of the existing meeting rooms. The final result is the same, we need 4 different meeting rooms to process all the meetings. That's the best we can do here.
            </Paragraph>
            <SolutionDiagram />
            <Scrollbar />
          </ContentPanel>
          <Footer>
            <FooterButton $w={110}><MdFormatListBulleted />Problems</FooterButton>
            <FooterButton $w={105} $ml={970}><MdShuffle />Pick One</FooterButton>
            <FooterButton $w={73} $ml={51} $dim><MdChevronLeft />Prev</FooterButton>
            <BugCount><MdOutlineBugReport />/1</BugCount>
            <FooterButton $w={74}>Next<MdChevronRight /></FooterButton>
          </Footer>
        </LeftColumn>

        <Splitter>
          {[0, 1, 2, 3, 4, 5].map(i => <GripDot key={i} />)}
        </Splitter>

        <RightColumn>
          <LangSelect><i>i</i>C++<MdArrowDropDown /></LangSelect>
          <AutoRow>Autocomplete</AutoRow>
          <IconRow>
            <ToolIcon><ItalicI>i</ItalicI></ToolIcon>
            <ToolIcon><BraceText>{"{}"}</BraceText></ToolIcon>
            <ToolIcon><MdReplay /></ToolIcon>
            <ToolIcon><GearIcon /></ToolIcon>
            <ToolIcon><MdFullscreen /></ToolIcon>
          </IconRow>
          <Editor>
            <Gutter>
              {codeRows.map((r, i) => (
                <GutterRow key={i}>
                  {r.n}
                  <FoldMark $show={!!r.fold} />
                </GutterRow>
              ))}
            </Gutter>
            <CodeArea>
              {codeRows.map((r, i) => (
                <CodeRow key={i}>
                  {r.segs.map((s, j) =>
                    typeof s === "string" ? s : <Tok key={j} $c={s[1]}>{s[0]}</Tok>
                  )}
                </CodeRow>
              ))}
            </CodeArea>
            <CopyButton><MdOutlineContentCopy /></CopyButton>
          </Editor>
          <Notice>Your previous code was restored from your local storage.</Notice>
          <LowerPane>
            <ConsoleRow>
              <ConsoleLabel>Console<MdArrowDropDown /></ConsoleLabel>
              <Contribute>Contribute<sup>i</sup></Contribute>
            </ConsoleRow>
            <ActionRow>
              <RunButton><MdPlayArrow />Run Code<MdKeyboardArrowUp /></RunButton>
              <SubmitButton>Submit</SubmitButton>
            </ActionRow>
          </LowerPane>
        </RightColumn>
      </Workspace>

      <Taskbar>
        <TaskIcons>
          {taskIcons.map((t, i) => (
            <TaskCell key={i} $on={t.on}>
              {t.icon}
              {t.on && <CellBadge>V</CellBadge>}
              {t.on && <RunDot $wide />}
              {t.dot && <RunDot />}
            </TaskCell>
          ))}
        </TaskIcons>
        <Tray>
          <TrayIcon $w={30}><MdKeyboardArrowUp size={24} /></TrayIcon>
          <TrayIcon $w={30}><TrayCloud /></TrayIcon>
          <TrayStack $w={56}><span>ENG</span><span>IN</span></TrayStack>
          <TrayIcon $w={38}><WifiIcon /></TrayIcon>
          <TrayIcon $w={24}><MuteIcon /></TrayIcon>
          <TrayIcon $w={34}><BatteryIcon /></TrayIcon>
          <TrayStack $w={84} $right><span>19:29</span><span>07-11-2021</span></TrayStack>
          <CountBadge>5</CountBadge>
        </Tray>
      </Taskbar>
    </Page>
  )
}
